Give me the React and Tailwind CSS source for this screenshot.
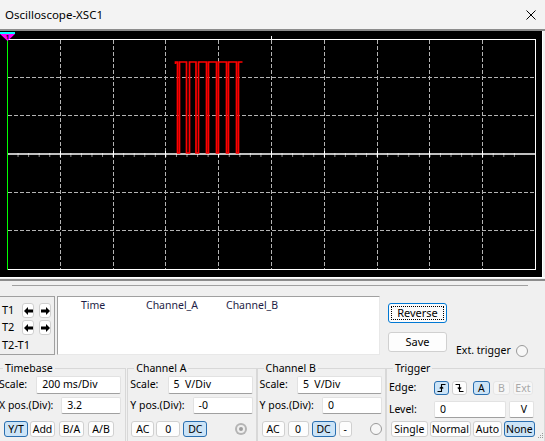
import clsx from "clsx";

function Btn({ sel, dis, className, children }) {
    return (
        <div
            className={clsx(
                "h-full flex items-center justify-center rounded-[3px] border leading-none",
                sel
                    ? "bg-[#cce4f7] border-[#2a6fb0]"
                    : dis
                    ? "bg-[#f6f6f6] border-[#e6e6e6] text-[#a8a8a8]"
                    : "bg-[#fdfdfd] border-[#d0d0d0]",
                className
            )}
        >
            {children}
        </div>
    );
}

function Field({ className, children }) {
    return (
        <div
            className={clsx(
                "h-full flex items-center pl-[5px] bg-white rounded-[2px] border border-[#e2e2e2] border-b-[#a0a0a0] whitespace-pre",
                className
            )}
        >
            {children}
        </div>
    );
}

function Arrow({ right }) {
    return (
        <div className="w-[12px] h-[15px] flex items-center justify-center bg-white border border-[#d0d0d0] rounded-[3px]">
            <svg width="9" height="8" viewBox="0 0 9 8" className={right ? "rotate-180" : ""}>
                <polygon points="0,4 4,0 4,2.4 9,2.4 9,5.6 4,5.6 4,8" fill="#000" />
            </svg>
        </div>
    );
}

function Radio({ checked }) {
    if (checked) {
        return (
            <div className="w-[12px] h-[12px] rounded-full bg-[#b4b4b4] flex items-center justify-center">
                <div className="w-[8px] h-[8px] rounded-full bg-[#eeeeee] flex items-center justify-center">
                    <div className="w-[4px] h-[4px] rounded-full bg-[#9d9d9d]" />
                </div>
            </div>
        );
    }
    return <div className="w-[12px] h-[12px] rounded-full border border-[#9a9a9a] bg-[#f7f7f7]" />;
}

const gridX = [60.5, 113.5, 165.5, 218.5, 271.5, 324.5, 377.5, 429.5, 482.5];
const gridY = [46.5, 84.5, 161.5, 199.5];
const ticks = Array.from({ length: 49 }, (_, i) => 7.5 + i * 10.56);

const wave =
    "M175.5 33 V31 H177.5 V122 H179.5 V31 H186.5 V122 H189.5 V31 H196 V122 H198.5 V31 H206.5 V122 H208.5 V31 H216.5 V122 H218.5 V31 H226.5 V122 H228.5 V31 H236.5 V122 H238.5 V31 H242.5";

function Scope() {
    return (
        <svg width="542" height="246" className="block">
            {gridX.map((x) => (
                <line key={"v" + x} x1={x} y1="9" x2={x} y2="238" stroke="#b4b4b4" strokeDasharray="4 2" />
            ))}
            {gridY.map((y) => (
                <line key={"h" + y} x1="8" y1={y} x2="535" y2={y} stroke="#b4b4b4" strokeDasharray="4 2" />
            ))}
            {ticks.map((x) => (
                <line key={"t" + x} x1={x} y1="122" x2={x} y2="126" stroke="#8c8c8c" />
            ))}
            {gridX.map((x) => (
                <line key={"m" + x} x1={x} y1="120" x2={x} y2="126" stroke="#ffffff" />
            ))}
            <line x1="8" y1="123" x2="535" y2="123" stroke="#ffffff" strokeWidth="1.6" />
            <rect x="7.5" y="8.5" width="528" height="230" fill="none" stroke="#ffffff" />
            <line x1="271.5" y1="5" x2="271.5" y2="9" stroke="#ffffff" />
            <path d={wave} fill="none" stroke="#ff0000" strokeWidth="1.7" />
            <line x1="7.5" y1="8" x2="7.5" y2="239" stroke="#00ff00" />
            <rect x="0" y="1" width="15" height="2" fill="#00ffff" />
            <polygon points="0,3 15,3 7.5,10" fill="#ff00ff" />
            <text x="7.5" y="8" fontSize="6" fontWeight="bold" textAnchor="middle" fill="#000">
                1
            </text>
        </svg>
    );
}

export default function App() {
    return (
        <div className="relative w-[545px] h-[441px] overflow-hidden bg-[#f0f0f0] font-['Noto_Sans',sans-serif] text-[10.5px] text-black">
            <div className="h-[29px] flex items-center justify-between pl-[5px] pr-[9px] bg-[#f3f3f3]">
                <span className="text-[11.5px]">Oscilloscope-XSC1</span>
                <svg width="10" height="10" viewBox="0 0 10 10">
                    <path d="M0.5 0.5 L9.5 9.5 M9.5 0.5 L0.5 9.5" stroke="#000" strokeWidth="1" />
                </svg>
            </div>
            <div className="h-[2px] bg-[#8c8c8c]" />
            <div className="w-[543px] h-[246px] bg-black border-r border-white">
                <Scope />
            </div>
            <div className="h-px bg-white" />
            <div className="h-px bg-[#f0f0f0]" />
            <div className="h-[2px] bg-[#8c8c8c]" />

            <div className="ml-[12px] mt-[4px] w-[516px] h-px bg-[#a0a0a0]" />

            <div className="flex mt-[10px] h-[59px]">
                <div className="w-[55px] h-[59px] border border-l-0 border-[#a0a0a0] pt-[6px] pl-[2px] text-[11px]">
                    <div className="flex items-center h-[15px]">
                        <span className="w-[20px]">T1</span>
                        <Arrow />
                        <div className="w-[5px]" />
                        <Arrow right />
                    </div>
                    <div className="flex items-center h-[15px] mt-[2px]">
                        <span className="w-[20px]">T2</span>
                        <Arrow />
                        <div className="w-[5px]" />
                        <Arrow right />
                    </div>
                    <div className="flex items-center h-[14px] mt-[3px]">T2-T1</div>
                </div>
                <div className="ml-[2px] w-[323px] h-[59px] bg-white border border-t-[#a0a0a0] border-l-[#a0a0a0] border-r-[#e8e8e8] border-b-[#e8e8e8] pt-px pl-[23px] flex text-[#1e1e46] leading-[14px]">
                    <span className="w-[65px]">Time</span>
                    <span className="w-[80px]">Channel_A</span>
                    <span>Channel_B</span>
                </div>
                <div className="ml-[8px] w-[59px] pt-[7px] text-[11px]">
                    <div className="h-[20px] flex items-center justify-center rounded-[3px] border border-[#0078d4] bg-[#fbfbfb] p-[2px]">
                        <div className="w-full h-full flex items-center justify-center border border-dotted border-black">
                            Reverse
                        </div>
                    </div>
                    <div className="mt-[9px] h-[20px] flex items-center justify-center rounded-[3px] border border-[#d0d0d0] bg-[#fdfdfd]">
                        Save
                    </div>
                </div>
                <div className="ml-[9px] mt-[48px] h-[14px] flex items-center">
                    <span>Ext. trigger</span>
                    <div className="ml-[5px]">
                        <Radio />
                    </div>
                </div>
            </div>

            <div className="flex mt-[6px]">
                <fieldset className="-ml-[4px] w-[131px] h-[84px] border border-[#d8d8d8] pl-[2px] pr-[4px]">
                    <legend className="ml-[4px] px-[2px] leading-[14px]">Timebase</legend>
                    <div className="mt-px h-[18px] flex items-center justify-between">
                        <span>Scale:</span>
                        <Field className="w-[85px]">200 ms/Div</Field>
                    </div>
                    <div className="mt-[3px] h-[17px] flex items-center justify-between">
                        <span>X pos.(Div):</span>
                        <Field className="w-[60px]">3.2</Field>
                    </div>
                    <div className="mt-[7px] h-[16px] flex">
                        <Btn sel className="ml-[5px] w-[24px]">Y/T</Btn>
                        <Btn className="ml-[2px] w-[25px]">Add</Btn>
                        <Btn className="ml-[4px] w-[25px]">B/A</Btn>
                        <Btn className="ml-[4px] w-[26px]">A/B</Btn>
                    </div>
                </fieldset>
                <fieldset className="ml-px w-[130px] h-[84px] border border-[#d8d8d8] pl-[2px] pr-[3px]">
                    <legend className="ml-[4px] px-[2px] leading-[14px]">Channel A</legend>
                    <div className="mt-px h-[18px] flex items-center justify-between">
                        <span>Scale:</span>
                        <Field className="w-[85px]">5  V/Div</Field>
                    </div>
                    <div className="mt-[3px] h-[17px] flex items-center justify-between">
                        <span>Y pos.(Div):</span>
                        <Field className="w-[60px]">-0</Field>
                    </div>
                    <div className="mt-[7px] h-[16px] flex items-center">
                        <Btn className="ml-px w-[23px]">AC</Btn>
                        <Btn className="ml-[2px] w-[24px]">0</Btn>
                        <Btn sel className="ml-[3px] w-[24px]">DC</Btn>
                        <div className="ml-[28px]">
                            <Radio checked />
                        </div>
                    </div>
                </fieldset>
                <fieldset className="w-[130px] h-[84px] border border-[#d8d8d8] pl-[2px] pr-[3px]">
                    <legend className="ml-[4px] px-[2px] leading-[14px]">Channel B</legend>
                    <div className="mt-px h-[18px] flex items-center justify-between">
                        <span>Scale:</span>
                        <Field className="w-[85px]">5  V/Div</Field>
                    </div>
                    <div className="mt-[3px] h-[17px] flex items-center justify-between">
                        <span>Y pos.(Div):</span>
                        <Field className="w-[60px]">0</Field>
                    </div>
                    <div className="mt-[7px] h-[16px] flex items-center">
                        <Btn className="ml-[2px] w-[23px]">AC</Btn>
                        <Btn className="ml-[3px] w-[21px]">0</Btn>
                        <Btn sel className="ml-[3px] w-[24px]">DC</Btn>
                        <Btn className="ml-[3px] w-[13px]">-</Btn>
                        <div className="ml-[18px]">
                            <Radio />
                        </div>
                    </div>
                </fieldset>
                <fieldset className="w-[160px] h-[84px] border border-[#d8d8d8] pl-[2px] pr-[3px]">
                    <legend className="ml-[4px] px-[2px] leading-[14px]">Trigger</legend>
                    <div className="mt-[5px] h-[16px] flex items-center">
                        <span className="w-[45px]">Edge:</span>
                        <div className="h-[14px] flex">
                            <Btn sel className="w-[15px]">
                                <svg width="9" height="10" viewBox="0 0 9 10">
                                    <path d="M0.5 8.5 H4.5 V1.5 H8.5 M2.8 5.5 L4.5 3.8 L6.2 5.5" fill="none" stroke="#000" strokeWidth="1.1" />
                                </svg>
                            </Btn>
                            <Btn className="ml-[3px] w-[15px]">
                                <svg width="9" height="10" viewBox="0 0 9 10">
                                    <path d="M0.5 1.5 H4.5 V8.5 H8.5 M2.8 4.5 L4.5 6.2 L6.2 4.5" fill="none" stroke="#000" strokeWidth="1.1" />
                                </svg>
                            </Btn>
                            <Btn sel className="ml-[6px] w-[17px]">A</Btn>
                            <Btn dis className="ml-[3px] w-[17px]">B</Btn>
                            <Btn dis className="ml-[3px] w-[20px]">Ext</Btn>
                        </div>
                    </div>
                    <div className="mt-[5px] h-[17px] flex items-center">
                        <span className="w-[45px]">Level:</span>
                        <Field className="w-[72px] border-b-[#6e6e6e]">0</Field>
                        <Field className="ml-[3px] w-[25px] pl-0 justify-center border-b-[#6e6e6e]">V</Field>
                    </div>
                    <div className="mt-[3px] h-[16px] flex">
                        <Btn className="ml-[2px] w-[37px]">Single</Btn>
                        <Btn className="ml-[2px] w-[41px]">Normal</Btn>
                        <Btn className="ml-[2px] w-[29px]">Auto</Btn>
                        <Btn sel className="ml-[2px] w-[31px]">None</Btn>
                    </div>
                </fieldset>
            </div>

            <svg width="6" height="6" className="absolute right-[1px] bottom-[2px]">
                <rect x="4" y="0" width="1" height="1" fill="#9a9a9a" />
                <rect x="2" y="2" width="1" height="1" fill="#9a9a9a" />
                <rect x="4" y="2" width="1" height="1" fill="#9a9a9a" />
                <rect x="0" y="4" width="1" height="1" fill="#9a9a9a" />
                <rect x="2" y="4" width="1" height="1" fill="#9a9a9a" />
                <rect x="4" y="4" width="1" height="1" fill="#9a9a9a" />
            </svg>
        </div>
    );
}
